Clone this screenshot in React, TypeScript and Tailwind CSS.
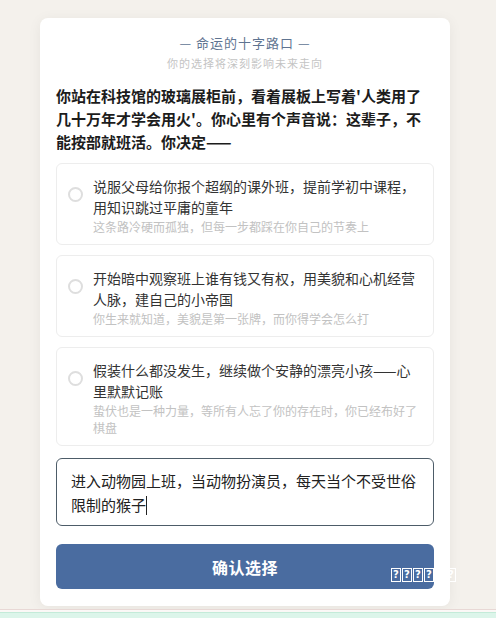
const options = [
  {
    id: 1,
    title: "说服父母给你报个超纲的课外班，提前学初中课程，用知识跳过平庸的童年",
    hint: "这条路冷硬而孤独，但每一步都踩在你自己的节奏上",
  },
  {
    id: 2,
    title: "开始暗中观察班上谁有钱又有权，用美貌和心机经营人脉，建自己的小帝国",
    hint: "你生来就知道，美貌是第一张牌，而你得学会怎么打",
  },
  {
    id: 3,
    title: "假装什么都没发生，继续做个安静的漂亮小孩——心里默默记账",
    hint: "蛰伏也是一种力量，等所有人忘了你的存在时，你已经布好了棋盘",
  },
];

const App = () => {
  const font = "font-['Noto_Sans_CJK_SC','Noto_Sans',sans-serif]";

  return (
    <div className={`relative w-[496px] h-[618px] overflow-hidden bg-[#f4f1ec] ${font}`}>
      <div className="h-[609px] pt-[18px]">
        <div className="mx-[40px] w-[410px] bg-white rounded-lg shadow-[0_2px_14px_rgba(0,0,0,0.06)] px-[16px] pt-[15px] pb-[17px]">
          <div className="text-center text-[13px] leading-[20px] tracking-[1px] text-[#5f7491]">— 命运的十字路口 —</div>
          <div className="mt-[2px] text-center text-[11px] leading-[16px] tracking-[1px] text-[#c4c4c4]">你的选择将深刻影响未来走向</div>

          <div className="mt-[13px] text-[15px] leading-[23px] font-bold text-[#1c1c1c]">
            你站在科技馆的玻璃展柜前，看着展板上写着'人类用了几十万年才学会用火'。你心里有个声音说：这辈子，不能按部就班活。你决定——
          </div>

          <div className="mt-[10px] flex flex-col gap-[10px]">
            {options.map((el) => (
              <div key={el.id} className="flex flex-row items-start gap-[10px] border border-[#ededed] rounded-md pl-[11px] pr-[11px] pt-[12px] pb-[9px]">
                <div className="mt-[11px] w-[15px] h-[15px] flex-none rounded-full border-2 border-[#dedede]" />
                <div className="flex-1">
                  <div className="text-[14px] leading-[21px] text-[#333333]">{el.title}</div>
                  <div className="text-[12px] leading-[17px] text-[#c2c2c2]">{el.hint}</div>
                </div>
              </div>
            ))}
          </div>

          <div className="mt-[12px] h-[68px] border border-[#4d5c68] rounded-md px-[14px] pt-[10px] text-[15px] leading-[24px] text-[#222222]">
            进入动物园上班，当动物扮演员，每天当个不受世俗限制的猴子
            <span className="inline-block w-px h-[19px] bg-[#222222] align-[-4px]" />
          </div>

          <button className="mt-[18px] w-full h-[45px] flex justify-center items-center rounded-md bg-[#4a6ca0] text-white text-[16px] font-bold tracking-[0.5px]">
            确认选择
          </button>
        </div>
      </div>

      <div className="h-px bg-[#e8d8d5]" />
      <div className="h-[2px] bg-[#fbf8f6]" />
      <div className="h-[6px] bg-[#dcf5ea] border-t border-[#c4ebd9]" />

      <div className="absolute left-[391px] top-[568px] flex flex-row gap-[1px] font-['DejaVu_Sans',sans-serif]">
        {[0, 1, 2, 3, 4, 5].map((i) => (
          <span key={i} className="w-[10px] h-[14px] flex justify-center items-center border border-white text-white text-[10px] font-bold leading-none">
            ?
          </span>
        ))}
      </div>
    </div>
  );
};

export default App;
